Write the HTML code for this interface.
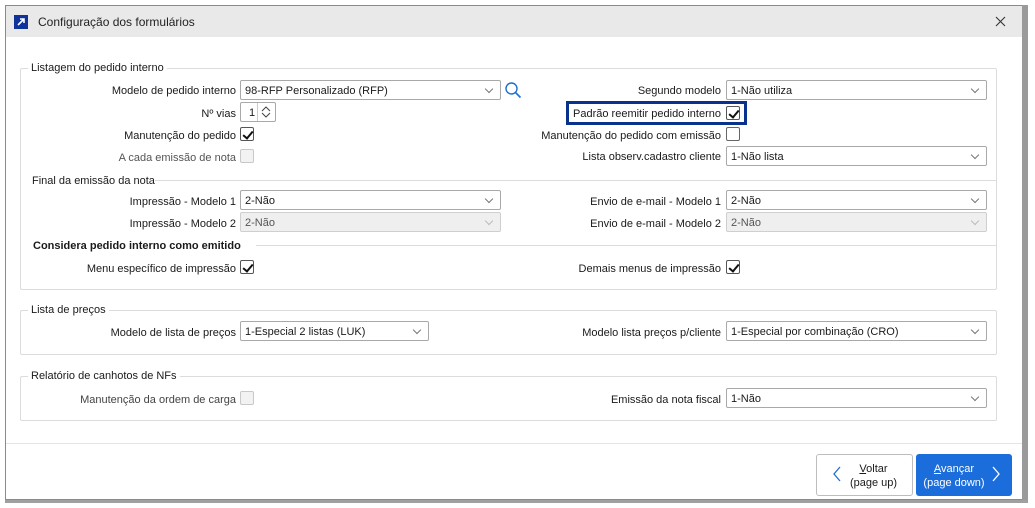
<!DOCTYPE html><html><head><meta charset="utf-8"><style>
*{box-sizing:border-box;margin:0;padding:0}
body{width:1035px;height:508px;background:#fff;position:relative;font-family:"Liberation Sans",sans-serif;font-size:11px;color:#1a1a1a;overflow:hidden}
.a{position:absolute}
.lbl{position:absolute;text-align:right;white-space:nowrap}
.sel{position:absolute;height:20px;border:1px solid #a9a9a9;border-radius:2px;background:#fff;padding:4px 4px 0;white-space:nowrap}
.sel.d{background:#efefef;border-color:#cfcfcf;color:#555}
.sel:after{content:"";position:absolute;right:8px;top:5px;width:5px;height:5px;border-right:1px solid #777;border-bottom:1px solid #777;transform:rotate(45deg)}
.sel.d:after{border-color:#bbb}
.cb{position:absolute;width:14px;height:14px;border:1px solid #555;border-radius:2px;background:#fff}
.cb.e{border-color:#666}
.cb.d{border-color:#c8c8c8;background:#f2f2f2}
.cb.c:after{content:"";position:absolute;left:4px;top:1px;width:4px;height:8px;border-right:2px solid #111;border-bottom:2px solid #111;transform:rotate(40deg)}
.grp{position:absolute;border:1px solid #dcdcdc;border-radius:2px}
.leg{position:absolute;background:#fff;padding:0 3px;white-space:nowrap}
.hl{position:absolute;height:1px;background:#dcdcdc}
</style></head><body>
<div class="a" style="left:5px;top:5px;width:1018px;height:495px;border:1px solid #8a8a8a;background:#fff"></div>
<div class="a" style="left:1022px;top:5px;width:6px;height:497px;background:#9a9a9a"></div>
<div class="a" style="left:5px;top:500px;width:1023px;height:3px;background:#a0a0a0"></div>
<div class="a" style="left:6px;top:6px;width:1016px;height:31px;background:#e9e9e9"></div>
<div class="a" style="left:14px;top:15px;width:14px;height:14px;background:#10339a"></div>
<svg class="a" style="left:14px;top:15px" width="14" height="14"><path d="M4 10 L10 4 M6 4 H10 V8" stroke="#fff" stroke-width="1.6" fill="none"/></svg>
<div class="a" style="left:38px;top:15px;font-size:12px;color:#222">Configuração dos formulários</div>
<svg class="a" style="left:995px;top:16px" width="11" height="11"><path d="M1 1L10 10M10 1L1 10" stroke="#333" stroke-width="1.1"/></svg>

<div class="grp" style="left:20px;top:68px;width:977px;height:222px"></div>
<div class="leg" style="left:28px;top:62px">Listagem do pedido interno</div>
<div class="lbl" style="right:799px;top:85px">Modelo de pedido interno</div>
<div class="sel" style="left:240px;top:80px;width:261px">98-RFP Personalizado (RFP)</div>
<svg class="a" style="left:504px;top:81px" width="18" height="18"><circle cx="7.5" cy="7.5" r="5.5" stroke="#1f6fd0" stroke-width="1.4" fill="none"/><path d="M11.5 11.5L16.5 16.5" stroke="#1f6fd0" stroke-width="1.6"/></svg>
<div class="lbl" style="right:799px;top:108px">Nº vias</div>
<div class="a" style="left:240px;top:102px;width:36px;height:20px;border:1px solid #a9a9a9;border-radius:2px;padding:4px 0 0 8px">1</div>
<div class="a" style="left:257px;top:103px;width:1px;height:18px;background:#ccc"></div>
<svg class="a" style="left:259px;top:104px" width="14" height="16"><path d="M3 7L7 3L11 7M3 9L7 13L11 9" stroke="#444" fill="none"/></svg>
<div class="lbl" style="right:799px;top:130px">Manutenção do pedido</div>
<div class="cb c" style="left:240px;top:127px"></div>
<div class="lbl" style="right:799px;top:152px;color:#555">A cada emissão de nota</div>
<div class="cb d" style="left:240px;top:149px"></div>

<div class="lbl" style="right:314px;top:85px">Segundo modelo</div>
<div class="sel" style="left:726px;top:80px;width:261px">1-Não utiliza</div>
<div class="a" style="left:566px;top:101px;width:181px;height:24px;border:3px solid #0a318c"></div>
<div class="lbl" style="right:314px;top:108px">Padrão reemitir pedido interno</div>
<div class="cb c" style="left:726px;top:106px"></div>
<div class="lbl" style="right:314px;top:130px">Manutenção do pedido com emissão</div>
<div class="cb e" style="left:726px;top:127px"></div>
<div class="lbl" style="right:314px;top:151px">Lista observ.cadastro cliente</div>
<div class="sel" style="left:726px;top:146px;width:261px">1-Não lista</div>

<div class="hl" style="left:155px;top:180px;width:841px"></div>
<div class="a" style="left:32px;top:175px">Final da emissão da nota</div>
<div class="lbl" style="right:799px;top:196px">Impressão - Modelo 1</div>
<div class="sel" style="left:240px;top:190px;width:261px">2-Não</div>
<div class="lbl" style="right:799px;top:218px">Impressão - Modelo 2</div>
<div class="sel d" style="left:240px;top:212px;width:261px">2-Não</div>
<div class="lbl" style="right:314px;top:196px">Envio de e-mail - Modelo 1</div>
<div class="sel" style="left:726px;top:190px;width:261px">2-Não</div>
<div class="lbl" style="right:314px;top:218px">Envio de e-mail - Modelo 2</div>
<div class="sel d" style="left:726px;top:212px;width:261px">2-Não</div>

<div class="hl" style="left:256px;top:245px;width:740px"></div>
<div class="a" style="left:33px;top:240px;font-weight:bold">Considera pedido interno como emitido</div>
<div class="lbl" style="right:799px;top:263px">Menu específico de impressão</div>
<div class="cb c" style="left:240px;top:260px"></div>
<div class="lbl" style="right:314px;top:263px">Demais menus de impressão</div>
<div class="cb c" style="left:726px;top:260px"></div>

<div class="grp" style="left:20px;top:310px;width:977px;height:45px"></div>
<div class="leg" style="left:28px;top:304px">Lista de preços</div>
<div class="lbl" style="right:799px;top:327px">Modelo de lista de preços</div>
<div class="sel" style="left:240px;top:321px;width:189px">1-Especial 2 listas (LUK)</div>
<div class="lbl" style="right:314px;top:327px">Modelo lista preços p/cliente</div>
<div class="sel" style="left:726px;top:321px;width:261px">1-Especial por combinação (CRO)</div>

<div class="grp" style="left:20px;top:376px;width:977px;height:45px"></div>
<div class="leg" style="left:28px;top:370px">Relatório de canhotos de NFs</div>
<div class="lbl" style="right:799px;top:394px;color:#444">Manutenção da ordem de carga</div>
<div class="cb d" style="left:240px;top:391px"></div>
<div class="lbl" style="right:314px;top:394px">Emissão da nota fiscal</div>
<div class="sel" style="left:726px;top:388px;width:261px">1-Não</div>

<div class="hl" style="left:6px;top:443px;width:1016px;background:#e4e4e4"></div>
<div class="a" style="left:816px;top:454px;width:97px;height:42px;border:1px solid #bdbdbd;border-radius:3px;background:#fff"></div>
<svg class="a" style="left:832px;top:466px" width="10" height="16"><path d="M8 1L2 8L8 15" stroke="#1f6fd0" stroke-width="1.3" fill="none"/></svg>
<div class="a" style="left:846px;top:462px;width:55px;text-align:center;line-height:14px"><u>V</u>oltar<br>(page up)</div>
<div class="a" style="left:916px;top:454px;width:96px;height:42px;border-radius:3px;background:#1c6ddc"></div>
<div class="a" style="left:920px;top:462px;width:68px;text-align:center;line-height:14px;color:#fff"><u>A</u>vançar<br>(page down)</div>
<svg class="a" style="left:991px;top:466px" width="10" height="16"><path d="M2 1L8 8L2 15" stroke="#fff" stroke-width="1.3" fill="none"/></svg>
</body></html>
